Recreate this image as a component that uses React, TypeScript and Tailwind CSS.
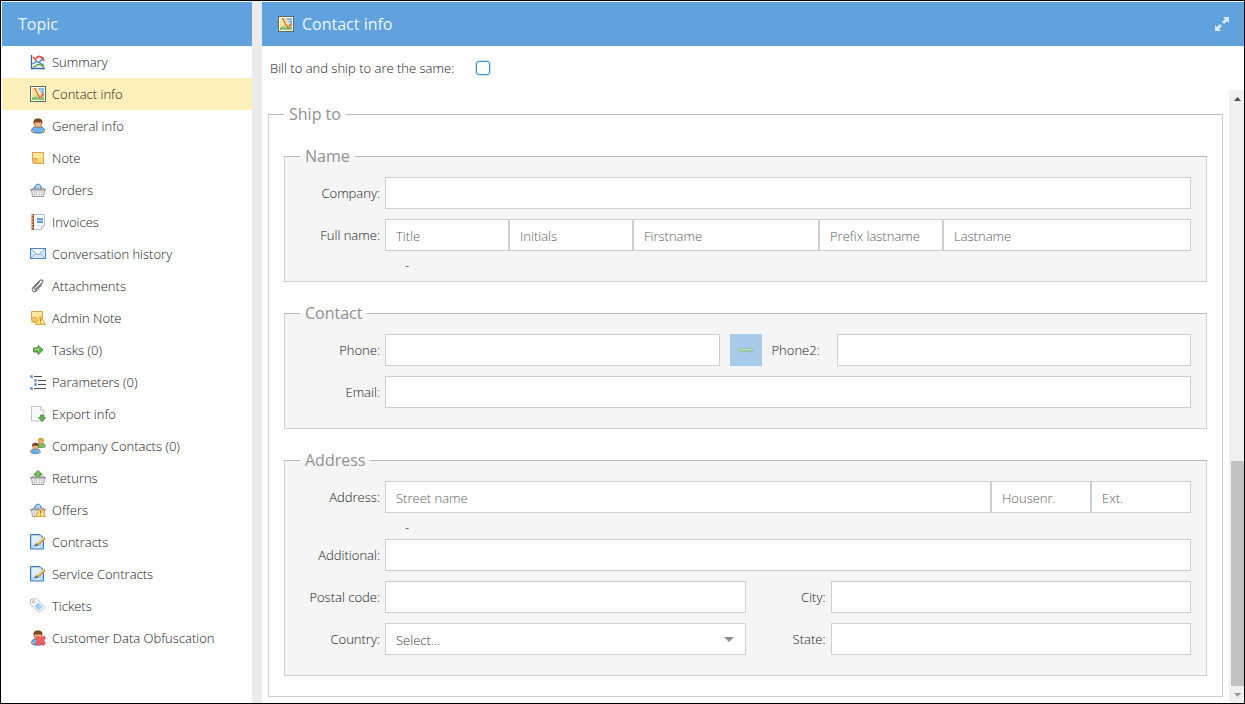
import { useState, type ReactNode } from "react"

const INPUT =
  "block h-8 w-full min-w-0 rounded-none border border-[#cfcfcf] bg-white px-2.5 pt-0.5 text-[13px] font-light text-[#404040] outline-none placeholder:text-[#606060] focus:border-[#5fa2dd]"

function Svg({ children }: { children: ReactNode }) {
  return (
    <svg width="16" height="16" viewBox="0 0 16 16" className="shrink-0" fill="none" aria-hidden="true">
      {children}
    </svg>
  )
}

function SummaryIcon() {
  return (
    <Svg>
      <path d="M3 3L6.5 6.500" stroke="#e8362e" strokeWidth="1.400" />
      <path d="M6 4.500C8 1.500 12 1.500 14 7" stroke="#ef4a42" strokeWidth="1.700" />
      <path d="M2.500 10L6 7.500L9 8.500L13.500 3.500M9 8.500L14 11.500" stroke="#3f7fd0" strokeWidth="1.300" />
      <path d="M3 13C5.500 13 6.500 10.500 9 10.500S12 12 14 13" stroke="#57a03c" strokeWidth="1.500" />
      <path d="M1.500 1V14.500H15" stroke="#2f66a8" strokeWidth="1.300" />
    </Svg>
  )
}

function MapIcon() {
  return (
    <Svg>
      <rect x="0.500" y="0.500" width="15" height="15" fill="#fdfdf0" stroke="#5b6b5c" />
      <rect x="2" y="2" width="12" height="12" fill="#f3e08d" />
      <path d="M8 2H14V9L11 7Z" fill="#86b3e6" />
      <path d="M2 11.500L6 9.500L10 12L14 9V14H2Z" fill="#83bf63" />
      <path d="M2 4.500H14M2 7.500H14M2 10.500H14M5 2V14M8 2V14M11 2V14" stroke="#fff" strokeOpacity="0.550" strokeWidth="0.600" />
      <path d="M4.500 2L7 7L10.500 13M10.500 11L13.500 7.500" stroke="#e0543a" strokeWidth="1.200" />
    </Svg>
  )
}

function Person({ shirt, edge, hair = "#7d4520" }: { shirt: string; edge: string; hair?: string }) {
  return (
    <>
      <path
        d="M1.500 13.500C1.500 10 3.500 9 5.500 9H10.500C12.500 9 14.500 10 14.500 13.500C12.500 15.500 3.500 15.500 1.500 13.500Z"
        fill={shirt}
        stroke={edge}
      />
      <path d="M1.500 12.500L3.500 14M14.500 12.500L12.500 14" stroke="#eba86c" strokeWidth="1.600" />
      <ellipse cx="8" cy="5.500" rx="3.600" ry="4" fill="#f0b67c" stroke="#a4693c" strokeWidth="0.700" />
      <path d="M4 6.500C2.500 2 5 0.500 8 0.500S13.500 2 12 6.500L11 4.200Q8 5 5 4.200Z" fill={hair} />
    </>
  )
}

function NoteShape() {
  return (
    <>
      <path d="M2.500 2.500H13.500V13.500H6L2.500 10.500Z" fill="#fbdc72" stroke="#e3a043" />
      <path d="M3 3H13V7L8 9L3 8Z" fill="#fdeeb0" fillOpacity="0.700" />
      <path d="M2 8H7.500V14H2Z" fill="#e8a748" />
      <path d="M3 9.500H6L4.500 11ZM6.500 10V12.500L5 11.500Z" fill="#fff2c4" />
      <path d="M2 11L5 14H2Z" fill="#f6d9a6" />
    </>
  )
}

function Warning() {
  return (
    <>
      <path d="M10.500 6L15.500 14.500H5.500Z" fill="#ffe27d" stroke="#e3a63c" strokeLinejoin="round" />
      <path d="M10.500 8.500V11.500M10.500 12.500V13.500" stroke="#a8721c" />
    </>
  )
}

function Basket({ back }: { back?: ReactNode }) {
  return (
    <>
      {back ?? (
        <>
          <path d="M4.500 7C4.500 0.500 11.500 0.500 11.500 7Z" fill="#8cbbe4" stroke="#4f86b5" />
          <path d="M6.500 7L7.500 3M9.500 7L9 3" stroke="#cbe5fa" />
        </>
      )}
      <path d="M0.500 8Q3 4.500 5.500 7M15.500 8Q13 4.500 10.500 7" stroke="#a0a0a0" />
      <path d="M1.500 8H14.500L13.500 14.500H2.500Z" fill="#fbfbfb" stroke="#9a9a9a" />
      <path d="M2.500 10H13.500M2.500 12H13.500M4.500 8V14M6.500 8V14M9.500 8V14M11.500 8V14" stroke="#c4c4c4" strokeWidth="0.700" />
      <path d="M0 7.500H16" stroke="#9a9a9a" />
    </>
  )
}

function InvoiceIcon() {
  return (
    <Svg>
      <path d="M3.500 0.500H14.500V12L11.500 15.500H3.500Z" fill="#f6f9fd" stroke="#bcc2ca" />
      <path d="M11.500 15V12H14" fill="#fff" stroke="#bcc2ca" />
      <rect x="7" y="4" width="6" height="5" fill="#639bdf" />
      <path d="M7.500 6.500H12.500M7 11.500H10" stroke="#cfe2fa" />
      <rect x="1.500" y="0" width="2.500" height="16" fill="#b75830" />
      <path d="M0.500 1.500H3M0.500 4.500H3M0.500 7.500H3M0.500 10.500H3M0.500 13.500H3" stroke="#ead0bd" />
    </Svg>
  )
}

function MailIcon() {
  return (
    <Svg>
      <rect x="0.500" y="2.500" width="15" height="10" fill="#d9eafc" stroke="#4a83c8" />
      <path d="M1 12L6 7.500M15 12L10 7.500" stroke="#91b7e4" />
      <path d="M1 3L8 9L15 3" fill="#f1f8ff" stroke="#7ba7dc" />
    </Svg>
  )
}

function ClipIcon() {
  return (
    <Svg>
      <path
        d="M9.500 4L4.500 9.500C3.500 11 5 12 6 11L12.500 4.500C14 2.500 11.500 1 10 2.500L3 9.500C0.500 12.500 4 15 6.500 12.500L12 6.500"
        stroke="#6f6f6f"
        strokeWidth="1.100"
      />
    </Svg>
  )
}

function TaskIcon() {
  return (
    <Svg>
      <path d="M3.500 6H8V3.500L13 8L8 12.500V10H3.500Z" fill="#6fb750" stroke="#4b8f3c" strokeLinejoin="round" />
      <path d="M4.500 7.500H9V6.500" stroke="#a5d98a" />
    </Svg>
  )
}

function ParameterIcon() {
  return (
    <Svg>
      <path d="M4 2.500H12M8 6.500H16M8 10.500H16M4 14.500H16" stroke="#4b4b4b" />
      <path d="M0 1H3V4H0ZM4 5H7V8H4ZM4 9H7V12H4ZM0 13H3V16H0Z" fill="#8fb6ec" />
      <path d="M1 2H2V3H1ZM5 6H6V7H5ZM5 10H6V11H5ZM1 14H2V15H1Z" fill="#4f83d6" />
    </Svg>
  )
}

function ExportIcon() {
  return (
    <Svg>
      <path d="M1.500 0.500H10.500L14 4V15H1.500Z" fill="#f8f8f8" stroke="#c4c4c4" />
      <path d="M10.500 0.500V4H14" fill="#fff" stroke="#c4c4c4" />
      <path d="M10.500 9H13.500V11.500H15.500L12 15.500L8.500 11.500H10.500Z" fill="#67b54c" stroke="#3f8c33" strokeWidth="0.800" />
    </Svg>
  )
}

function ContractIcon() {
  return (
    <Svg>
      <path d="M0.500 0.500H10L13.500 4V15H0.500Z" fill="#a9d3f8" stroke="#3d7bc4" />
      <path d="M2 2H9.500L12 5V8L2 11Z" fill="#e1f1fd" />
      <path d="M2.500 13H11.500" stroke="#eef7ff" />
      <path d="M4 13L6.500 9L8.500 11Z" fill="#4a5d70" />
      <path d="M7.500 10.500L15 3.500" stroke="#b8933c" strokeWidth="2.400" />
      <path d="M7.500 9.800L15 3" stroke="#f4d878" strokeWidth="1.200" />
    </Svg>
  )
}

function TicketIcon() {
  return (
    <Svg>
      <path d="M0.500 1.500L6.500 0.500L15 9.500L9.500 14.500L0.500 6.500Z" fill="#fafafa" stroke="#b9bec3" />
      <path d="M4.500 8L8 4.500L12.500 9L9 12.500Z" fill="#9bd1f8" />
      <circle cx="3.500" cy="3.800" r="1.200" fill="#fff" stroke="#a7a7a7" />
    </Svg>
  )
}

const TOPICS: { label: string; icon: ReactNode }[] = [
  { label: "Summary", icon: <SummaryIcon /> },
  { label: "Contact info", icon: <MapIcon /> },
  { label: "General info", icon: <Svg><Person shirt="#70b1f4" edge="#2f6fb8" /></Svg> },
  { label: "Note", icon: <Svg><NoteShape /></Svg> },
  { label: "Orders", icon: <Svg><Basket /></Svg> },
  { label: "Invoices", icon: <InvoiceIcon /> },
  { label: "Conversation history", icon: <MailIcon /> },
  { label: "Attachments", icon: <ClipIcon /> },
  {
    label: "Admin Note",
    icon: (
      <Svg>
        <g transform="translate(-1 -1)">
          <NoteShape />
        </g>
        <Warning />
      </Svg>
    ),
  },
  { label: "Tasks (0)", icon: <TaskIcon /> },
  { label: "Parameters (0)", icon: <ParameterIcon /> },
  { label: "Export info", icon: <ExportIcon /> },
  {
    label: "Company Contacts (0)",
    icon: (
      <Svg>
        <g transform="translate(5.500 -0.500) scale(0.680)">
          <Person shirt="#79c361" edge="#3c8b33" hair="#e2a02f" />
        </g>
        <g transform="translate(-0.500 4.500) scale(0.740)">
          <Person shirt="#70b1f4" edge="#2f6fb8" />
        </g>
      </Svg>
    ),
  },
  {
    label: "Returns",
    icon: (
      <Svg>
        <Basket back={<path d="M8 0.500L12 4.500H10V8H6V4.500H4Z" fill="#79c45b" stroke="#4b8f3c" />} />
      </Svg>
    ),
  },
  { label: "Offers", icon: <Svg><Basket /><Warning /></Svg> },
  { label: "Contracts", icon: <ContractIcon /> },
  { label: "Service Contracts", icon: <ContractIcon /> },
  { label: "Tickets", icon: <TicketIcon /> },
  {
    label: "Customer Data Obfuscation",
    icon: (
      <Svg>
        <Person shirt="#70b1f4" edge="#2f6fb8" />
        <path
          d="M7.500 6L10.500 8L14 6L15.500 8L13.500 10.500L15.500 13.500L13.500 15.500L10.500 13.500L7.500 15.500L5.500 13.500L7.500 10.500L5.500 8Z"
          fill="#fb5f60"
          stroke="#e8484c"
          strokeWidth="0.800"
        />
      </Svg>
    ),
  },
]

function Group({ title, className, children }: { title: string; className: string; children: ReactNode }) {
  return (
    <fieldset className={`min-w-0 border border-[#cfcfcf] border-t-[#b9b9b9] px-[15px] ${className}`}>
      <legend className="px-[5px] text-base leading-6 font-normal text-[#919191]">{title}</legend>
      {children}
    </fieldset>
  )
}

function Field({ id, label, children }: { id: string; label: string; children: ReactNode }) {
  return (
    <div className="flex min-w-0 flex-1 items-center gap-[5px]">
      <label htmlFor={id} className="w-20 shrink-0 text-right">
        {label}:
      </label>
      <div className="flex min-w-0 flex-1">{children}</div>
    </div>
  )
}

export default function App() {
  const [active, setActive] = useState("Contact info")

  return (
    <div className="flex min-h-screen border border-black bg-white pt-px pl-px font-['Open_Sans',sans-serif] text-[13px] leading-5 font-light text-[#202020]">
      <aside className="w-[250px] shrink-0">
        <h2 className="flex h-11 items-center bg-[#5fa2dd] px-4 text-base font-normal text-[#f0f5fa]">Topic</h2>
        <nav>
          {TOPICS.map((topic) => (
            <a
              key={topic.label}
              href="#"
              onClick={(e) => {
                e.preventDefault()
                setActive(topic.label)
              }}
              className={`flex h-8 items-center gap-1.5 pl-7 ${topic.label === active ? "bg-[#ffefbb]" : "hover:bg-[#f5f5f5]"}`}
            >
              {topic.icon}
              {topic.label}
            </a>
          ))}
        </nav>
      </aside>

      <div className="-mt-px w-2.5 shrink-0 bg-[#ebebeb]" />

      <main className="flex min-w-0 flex-1 flex-col">
        <header className="flex h-11 items-center gap-2 bg-[#5fa2dd] pr-3.5 pl-4 text-[#f0f5fa]">
          <MapIcon />
          <h1 className="flex-1 text-base font-normal">Contact info</h1>
          <button type="button" aria-label="Expand" className="text-[#deebf8]">
            <svg width="16" height="16" viewBox="0 0 16 16" fill="currentColor">
              <path d="M9 1H15V7L13 5L10 8L8 6L11 3ZM7 15H1V9L3 11L6 8L8 10L5 13Z" />
            </svg>
          </button>
        </header>

        <div className="flex h-11 items-center gap-[22px] px-2">
          <label htmlFor="same">Bill to and ship to are the same:</label>
          <input
            id="same"
            type="checkbox"
            className="size-[14px] appearance-none rounded-[3px] border border-[#3892d8] bg-white ring-1 ring-[#3892d8]/25 checked:bg-[#3892d8]"
          />
        </div>

        <div className="flex min-w-0 flex-1">
          <div className="min-w-0 flex-1 px-1.5 pt-3 pb-1.5">
            <Group title="Ship to" className="pb-5">
              <div className="flex flex-col gap-[19px] pt-[18px]">
                <Group title="Name" className="bg-[#f5f5f5] pb-1">
                  <div className="flex flex-col gap-2.5 pt-[9px]">
                    <Field id="company" label="Company">
                      <input id="company" className={INPUT} />
                    </Field>
                    <Field id="title" label="Full name">
                      <div className="grid flex-1 grid-cols-[2fr_2fr_3fr_2fr_4fr]">
                        <input id="title" placeholder="Title" className={INPUT} />
                        <input aria-label="Initials" placeholder="Initials" className={INPUT} />
                        <input aria-label="Firstname" placeholder="Firstname" className={INPUT} />
                        <input aria-label="Prefix lastname" placeholder="Prefix lastname" className={INPUT} />
                        <input aria-label="Lastname" placeholder="Lastname" className={INPUT} />
                      </div>
                    </Field>
                  </div>
                  <p className="pt-0.5 pl-[105px] leading-6">-</p>
                </Group>

                <Group title="Contact" className="bg-[#f5f5f5] pb-5">
                  <div className="flex flex-col gap-2.5 pt-[9px]">
                    <div className="flex gap-2.5">
                      <Field id="phone" label="Phone">
                        <input id="phone" type="tel" className={INPUT} />
                      </Field>
                      <button
                        type="button"
                        aria-label="Swap phone numbers"
                        className="flex size-8 shrink-0 items-center justify-center bg-[#a9cbeb]"
                      >
                        <Svg>
                          <path d="M0 8L4 4V6H12V4L16 8L12 12V10H4V12Z" fill="#99c6a4" />
                          <path d="M1.500 8L4 6V7H12V6L14 8Z" fill="#bfe3b4" />
                        </Svg>
                      </button>
                      <div className="flex min-w-0 flex-1 items-center gap-[5px]">
                        <label htmlFor="phone2" className="w-[60px] shrink-0">
                          Phone2:
                        </label>
                        <input id="phone2" type="tel" className={INPUT} />
                      </div>
                    </div>
                    <Field id="email" label="Email">
                      <input id="email" type="email" className={INPUT} />
                    </Field>
                  </div>
                </Group>

                <Group title="Address" className="bg-[#f5f5f5] pb-5">
                  <div className="pt-[9px]">
                    <Field id="street" label="Address">
                      <div className="grid flex-1 grid-cols-[1fr_100px_100px]">
                        <input id="street" placeholder="Street name" className={INPUT} />
                        <input aria-label="House number" placeholder="Housenr." className={INPUT} />
                        <input aria-label="Extension" placeholder="Ext." className={INPUT} />
                      </div>
                    </Field>
                  </div>
                  <p className="pt-0.5 pl-[105px] leading-6">-</p>
                  <div className="flex flex-col gap-2.5">
                    <Field id="additional" label="Additional">
                      <input id="additional" className={INPUT} />
                    </Field>
                    <div className="flex">
                      <Field id="postal" label="Postal code">
                        <input id="postal" className={INPUT} />
                      </Field>
                      <Field id="city" label="City">
                        <input id="city" className={INPUT} />
                      </Field>
                    </div>
                    <div className="flex">
                      <Field id="country" label="Country">
                        <div className="relative flex-1">
                          <select id="country" defaultValue="" className={`${INPUT} appearance-none`}>
                            <option value="">Select...</option>
                            <option>Belgium</option>
                            <option>Germany</option>
                            <option>Netherlands</option>
                          </select>
                          <svg
                            width="10"
                            height="5"
                            viewBox="0 0 10 5"
                            className="pointer-events-none absolute top-3.5 right-3 text-[#8c8c8c]"
                          >
                            <path d="M0 0H10L5 5Z" fill="currentColor" />
                          </svg>
                        </div>
                      </Field>
                      <Field id="state" label="State">
                        <input id="state" className={INPUT} />
                      </Field>
                    </div>
                  </div>
                </Group>
              </div>
            </Group>
          </div>

          {/* scroll track, parked near the bottom */}
          <div className="flex w-[15px] shrink-0 flex-col bg-[#f0f0f0]" aria-hidden="true">
            <div className="flex h-[17px] items-center justify-center pl-0.5">
              <svg width="7" height="4" viewBox="0 0 7 4">
                <path d="M0 4L3.500 0L7 4Z" fill="#505050" />
              </svg>
            </div>
            <div className="flex-[354]" />
            <div className="ml-0.5 flex-[225] bg-[#c1c1c1]" />
            <div className="flex h-[17px] items-center justify-center pl-0.5">
              <svg width="7" height="4" viewBox="0 0 7 4">
                <path d="M0 0H7L3.500 4Z" fill="#9b9b9b" />
              </svg>
            </div>
          </div>
        </div>
      </main>
    </div>
  )
}
